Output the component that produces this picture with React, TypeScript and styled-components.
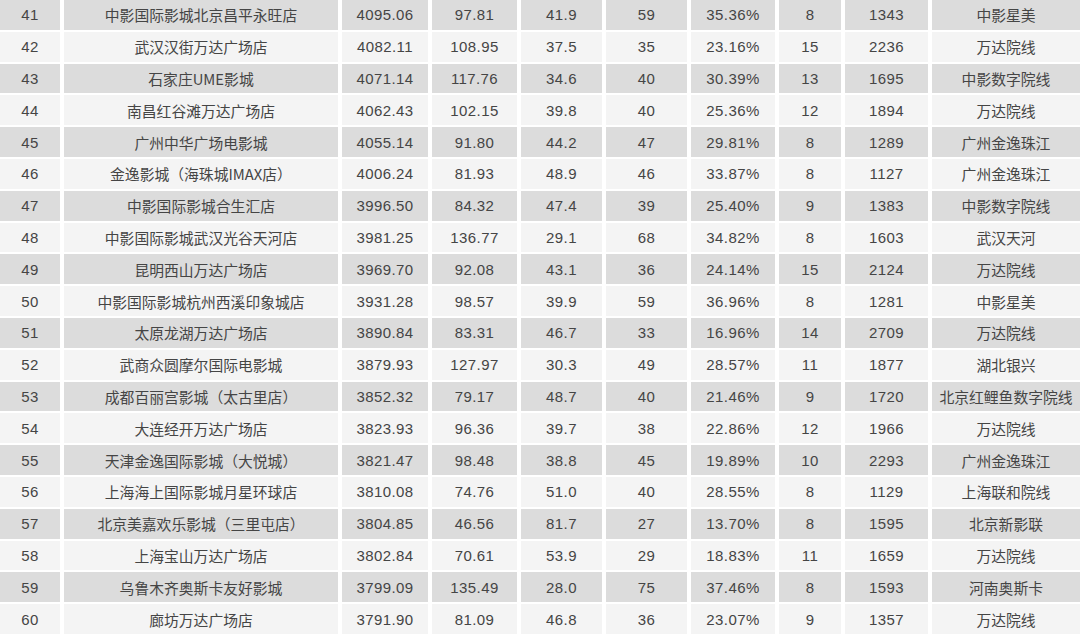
import styled, { createGlobalStyle } from 'styled-components'

const GlobalStyle = createGlobalStyle`
    html, body {
        margin: 0;
        padding: 0;
        background: #ffffff;
    }
`

const rows = [
    ['41', '中影国际影城北京昌平永旺店', '4095.06', '97.81', '41.9', '59', '35.36%', '8', '1343', '中影星美'],
    ['42', '武汉汉街万达广场店', '4082.11', '108.95', '37.5', '35', '23.16%', '15', '2236', '万达院线'],
    ['43', '石家庄UME影城', '4071.14', '117.76', '34.6', '40', '30.39%', '13', '1695', '中影数字院线'],
    ['44', '南昌红谷滩万达广场店', '4062.43', '102.15', '39.8', '40', '25.36%', '12', '1894', '万达院线'],
    ['45', '广州中华广场电影城', '4055.14', '91.80', '44.2', '47', '29.81%', '8', '1289', '广州金逸珠江'],
    ['46', '金逸影城（海珠城IMAX店）', '4006.24', '81.93', '48.9', '46', '33.87%', '8', '1127', '广州金逸珠江'],
    ['47', '中影国际影城合生汇店', '3996.50', '84.32', '47.4', '39', '25.40%', '9', '1383', '中影数字院线'],
    ['48', '中影国际影城武汉光谷天河店', '3981.25', '136.77', '29.1', '68', '34.82%', '8', '1603', '武汉天河'],
    ['49', '昆明西山万达广场店', '3969.70', '92.08', '43.1', '36', '24.14%', '15', '2124', '万达院线'],
    ['50', '中影国际影城杭州西溪印象城店', '3931.28', '98.57', '39.9', '59', '36.96%', '8', '1281', '中影星美'],
    ['51', '太原龙湖万达广场店', '3890.84', '83.31', '46.7', '33', '16.96%', '14', '2709', '万达院线'],
    ['52', '武商众圆摩尔国际电影城', '3879.93', '127.97', '30.3', '49', '28.57%', '11', '1877', '湖北银兴'],
    ['53', '成都百丽宫影城（太古里店）', '3852.32', '79.17', '48.7', '40', '21.46%', '9', '1720', '北京红鲤鱼数字院线'],
    ['54', '大连经开万达广场店', '3823.93', '96.36', '39.7', '38', '22.86%', '12', '1966', '万达院线'],
    ['55', '天津金逸国际影城（大悦城）', '3821.47', '98.48', '38.8', '45', '19.89%', '10', '2293', '广州金逸珠江'],
    ['56', '上海海上国际影城月星环球店', '3810.08', '74.76', '51.0', '40', '28.55%', '8', '1129', '上海联和院线'],
    ['57', '北京美嘉欢乐影城（三里屯店）', '3804.85', '46.56', '81.7', '27', '13.70%', '8', '1595', '北京新影联'],
    ['58', '上海宝山万达广场店', '3802.84', '70.61', '53.9', '29', '18.83%', '11', '1659', '万达院线'],
    ['59', '乌鲁木齐奥斯卡友好影城', '3799.09', '135.49', '28.0', '75', '37.46%', '8', '1593', '河南奥斯卡'],
    ['60', '廊坊万达广场店', '3791.90', '81.09', '46.8', '36', '23.07%', '9', '1357', '万达院线'],
]

// columns holding Chinese text
const textCols = [1, 9]

const App = () => {
    return (
        <>
            <GlobalStyle />
            <Table>
                {rows.map((row, idx) => (
                    <Row key={row[0]}>
                        {row.map((value, col) => (
                            <Cell
                                key={col}
                                $shaded={idx % 2 === 0}
                                $text={textCols.includes(col)}
                            >
                                {value}
                            </Cell>
                        ))}
                    </Row>
                ))}
            </Table>
        </>
    )
}

export default App

const Table = styled.div`
    width: 1080px;
    height: 634px;
    display: flex;
    flex-direction: column;
    gap: 2px;
    overflow: hidden;
`

const Row = styled.div`
    display: grid;
    grid-template-columns: 60px 274px 86px 85px 81px 81px 84px 62px 83px 148px;
    column-gap: 4px;
    height: 29.8px;
`

const Cell = styled.div<{ $shaded: boolean; $text: boolean }>`
    display: flex;
    align-items: center;
    justify-content: center;
    background: ${(props) => (props.$shaded ? '#dcdcdc' : '#f4f4f4')};
    color: #454545;
    font-family: ${(props) =>
        props.$text
            ? "'Noto Sans CJK SC', 'Liberation Sans', sans-serif"
            : "'Liberation Sans', 'Noto Sans CJK SC', sans-serif"};
    font-size: ${(props) => (props.$text ? '14.8px' : '15px')};
    letter-spacing: ${(props) => (props.$text ? '0' : '0.4px')};
    white-space: nowrap;
    overflow: hidden;
`
